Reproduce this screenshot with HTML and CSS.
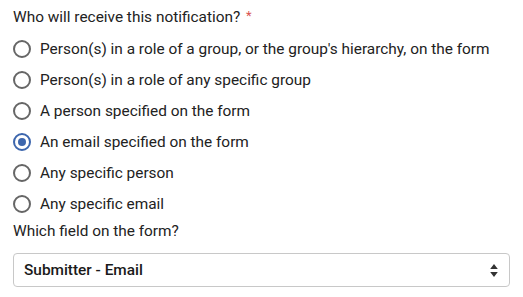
FILE: index.html
```html
<!DOCTYPE html>
<html>
<head>
<meta charset="utf-8">
<link rel="stylesheet" href="styles.css">
</head>
<body>
<div class="form">
  <div class="question">Who will receive this notification? <span class="req">*</span></div>
  <div class="options">
    <label class="option"><span class="radio"></span><span>Person(s) in a role of a group, or the group's hierarchy, on the form</span></label>
    <label class="option"><span class="radio"></span><span>Person(s) in a role of any specific group</span></label>
    <label class="option"><span class="radio"></span><span>A person specified on the form</span></label>
    <label class="option"><span class="radio checked"></span><span>An email specified on the form</span></label>
    <label class="option"><span class="radio"></span><span>Any specific person</span></label>
    <label class="option"><span class="radio"></span><span>Any specific email</span></label>
  </div>
  <div class="question sub">Which field on the form?</div>
  <div class="select">
    <span class="value">Submitter - Email</span>
    <svg class="arrows" width="8" height="15" viewBox="0 0 8 15"><path d="M4 1 L7.8 6 H0.2 Z M4 14 L7.8 9 H0.2 Z" fill="#333"/></svg>
  </div>
</div>
</body>
</html>
```
FILE: styles.css
```css
html, body { margin: 0; padding: 0; background: #fff; }
body { font-family: Roboto, "Noto Sans", sans-serif; color: #222; font-size: 15.4px; }
.form { padding: 6px 13px 0 13px; width: 497px; }
.question { line-height: 22px; height: 22px; }
.req { color: #d9534f; font-size: 13px; vertical-align: top; position: relative; top: -1px; margin-left: 2px; }
.options { display: flex; flex-direction: column; padding-top: 5px; }
.option { display: flex; align-items: center; height: 31px; gap: 9px; }
.radio { width: 14px; height: 14px; border: 2px solid #666; border-radius: 50%; box-sizing: content-box; flex: none; display: flex; align-items: center; justify-content: center; }
.radio.checked { border-color: #3d66ad; }
.radio.checked::after { content: ""; width: 8px; height: 8px; border-radius: 50%; background: #3d66ad; }
.question.sub { margin-top: 1px; }
.select { margin-top: 11px; height: 32px; border: 1px solid #c8c8c8; border-radius: 4px; display: flex; align-items: center; justify-content: space-between; padding: 0 11px 0 10px; font-weight: 500; color: #1a1a1a; }
.arrows { display: block; }
```
